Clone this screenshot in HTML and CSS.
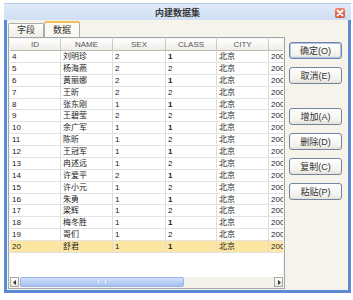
FILE: index.html
```html
<html>
<head>
    <link rel="stylesheet" href="styles.css">
</head>

<body>
    <div class="window">
        <!-- Title bar -->
        <div class="titlebar">
            <span class="title">内建数据集</span>
            <span class="close">
                <svg width="10" height="10" viewBox="0 0 10 10">
                    <path d="M2.5 2.5 L7.5 7.5 M7.5 2.5 L2.5 7.5" stroke="#fff" stroke-width="1.8" stroke-linecap="round" />
                </svg>
            </span>
        </div>

        <div class="client">
            <!-- Tab control with the data grid -->
            <div class="tabs">
                <div class="tabstrip">
                    <span class="tab">字段</span>
                    <span class="tab active">数据</span>
                </div>
                <div class="panel">
                    <div class="grid">
                        <div class="row head">
                            <span>ID</span><span>NAME</span><span>SEX</span><span>CLASS</span><span>CITY</span><span>DATE</span>
                        </div>
                        <div class="row"><span>4</span><span>刘明珍</span><span>2</span><span class="b">1</span><span>北京</span><span>2000-1-1</span></div>
                        <div class="row"><span>5</span><span>杨海燕</span><span>2</span><span>2</span><span>北京</span><span>2000-1-1</span></div>
                        <div class="row"><span>6</span><span>黄丽娜</span><span>2</span><span class="b">1</span><span>北京</span><span>2000-1-1</span></div>
                        <div class="row"><span>7</span><span>王昕</span><span>2</span><span>2</span><span>北京</span><span>2000-1-1</span></div>
                        <div class="row"><span>8</span><span>张东刚</span><span>1</span><span class="b">1</span><span>北京</span><span>2000-1-1</span></div>
                        <div class="row"><span>9</span><span>王碧莹</span><span>2</span><span>2</span><span>北京</span><span>2000-1-1</span></div>
                        <div class="row"><span>10</span><span>余广军</span><span>1</span><span class="b">1</span><span>北京</span><span>2000-1-1</span></div>
                        <div class="row"><span>11</span><span>陈昕</span><span>1</span><span>2</span><span>北京</span><span>2000-1-1</span></div>
                        <div class="row"><span>12</span><span>王冠军</span><span>1</span><span class="b">1</span><span>北京</span><span>2000-1-1</span></div>
                        <div class="row"><span>13</span><span>冉述远</span><span>1</span><span>2</span><span>北京</span><span>2000-1-1</span></div>
                        <div class="row"><span>14</span><span>许爱平</span><span>2</span><span class="b">1</span><span>北京</span><span>2000-1-1</span></div>
                        <div class="row"><span>15</span><span>许小元</span><span>1</span><span>2</span><span>北京</span><span>2000-1-1</span></div>
                        <div class="row"><span>16</span><span>朱勇</span><span>1</span><span class="b">1</span><span>北京</span><span>2000-1-1</span></div>
                        <div class="row"><span>17</span><span>梁辉</span><span>1</span><span>2</span><span>北京</span><span>2000-1-1</span></div>
                        <div class="row"><span>18</span><span>梅冬胜</span><span>1</span><span class="b">1</span><span>北京</span><span>2000-1-1</span></div>
                        <div class="row"><span>19</span><span>哥们</span><span>1</span><span>2</span><span>北京</span><span>2000-1-1</span></div>
                        <div class="row sel"><span>20</span><span>舒君</span><span>1</span><span class="b">1</span><span>北京</span><span>2000-1-1</span></div>
                    </div>

                    <!-- Horizontal scrollbar -->
                    <div class="hscroll">
                        <span class="arrow">
                            <svg width="4" height="5" viewBox="0 0 4 5"><path d="M3 0 L0 2.5 L3 5 Z" fill="#333" /></svg>
                        </span>
                        <span class="thumb"><span class="grip"></span></span>
                        <span class="track"></span>
                        <span class="arrow">
                            <svg width="4" height="5" viewBox="0 0 4 5"><path d="M1 0 L4 2.5 L1 5 Z" fill="#333" /></svg>
                        </span>
                    </div>
                </div>
            </div>

            <!-- Buttons -->
            <div class="buttons">
                <button class="default">确定(O)</button>
                <button>取消(E)</button>
                <button class="spaced">增加(A)</button>
                <button>删除(D)</button>
                <button>复制(C)</button>
                <button>粘贴(P)</button>
            </div>
        </div>
    </div>
</body>
</html>
```

FILE: styles.css
```css
body {
    margin: 0;
    background-color: #ffffff;
    font-family: "Liberation Sans", "Noto Sans CJK SC", sans-serif;
    color: #222;
}

.window {
    margin: 3px 0 0 4px;
    width: 347px;
    height: 290px;
    display: flex;
    flex-direction: column;
}

.titlebar {
    height: 17px;
    box-sizing: border-box;
    border-top: 1px solid #b9cbe6;
    background: linear-gradient(#dfeaf8, #cfdff4);
    display: flex;
    align-items: center;
    justify-content: center;
    position: relative;
}

.title {
    font-size: 9px;
    font-weight: bold;
    color: #3a3a3a;
}

.close {
    position: absolute;
    right: 6px;
    top: 4px;
    width: 10px;
    height: 10px;
    border-radius: 2px;
    background: linear-gradient(#ef8a70, #d4502f);
    display: flex;
}

.client {
    flex: 1;
    display: flex;
    border: 3px solid #5b8ad6;
    border-top: none;
    background-color: #f6f4ea;
}

.tabs {
    width: 277px;
    margin-left: 1px;
    display: flex;
    flex-direction: column;
}

.tabstrip {
    height: 17px;
    display: flex;
    align-items: flex-end;
}

.tab {
    width: 36px;
    height: 14px;
    box-sizing: border-box;
    border: 1px solid #a7aeb4;
    border-bottom: none;
    border-radius: 2px 2px 0 0;
    background: linear-gradient(#fdfdfb, #efeee6);
    font-size: 9px;
    text-align: center;
    line-height: 13px;
    color: #333;
}

.tab.active {
    height: 16px;
    border-top: 2px solid #f2c15a;
    background: #faf9f2;
    line-height: 14px;
}

.panel {
    height: 252px;
    box-sizing: border-box;
    border: 1px solid #9ea8ae;
    padding: 1px;
    display: flex;
    flex-direction: column;
}

.grid {
    height: 238px;
    background-color: #ffffff;
    overflow: hidden;
}

.row {
    display: grid;
    grid-template-columns: 51px 52px 53px 51px 52px 60px;
    height: 11.875px;
}

.row span {
    box-sizing: border-box;
    border-right: 1px solid #dedede;
    border-bottom: 1px solid #e2e2e2;
    padding-left: 2px;
    font-size: 8px;
    line-height: 11px;
    white-space: nowrap;
    overflow: hidden;
}

.row.head {
    height: 12px;
}

.row.head span {
    background: linear-gradient(#ffffff, #eeede8);
    border-right: 1px solid #c9c9c4;
    border-bottom: 1px solid #bcbcb6;
    text-align: center;
    color: #555;
    padding-left: 0;
}

.row.sel {
    background-color: #fde6a1;
}

.row .b {
    font-weight: bold;
}

.hscroll {
    height: 10px;
    display: flex;
    background-color: #f3f2ec;
}

.arrow {
    width: 9px;
    box-sizing: border-box;
    border: 1px solid #a9a9a4;
    background: linear-gradient(#ffffff, #e6e5de);
    display: flex;
    align-items: center;
    justify-content: center;
}

.thumb {
    width: 164px;
    margin-left: 1px;
    box-sizing: border-box;
    border: 1px solid #98b4e6;
    border-radius: 2px;
    background: linear-gradient(#d3e1f8, #b6cdf3 60%, #a7c1ef);
    display: flex;
    align-items: center;
    justify-content: center;
}

.grip {
    width: 6px;
    height: 4px;
    border-left: 1px solid #e8f0fc;
    border-right: 1px solid #e8f0fc;
}

.track {
    flex: 1;
}

.buttons {
    margin-left: 4px;
    padding-top: 22px;
    display: flex;
    flex-direction: column;
    gap: 8px;
}

button {
    width: 53px;
    height: 17px;
    padding: 0;
    border: 1px solid #7584a2;
    border-radius: 3px;
    background: linear-gradient(#ffffff, #f3f2ec 75%, #e3e1d8);
    font-family: "Liberation Sans", "Noto Sans CJK SC", sans-serif;
    font-size: 9px;
    color: #333;
}

button.default {
    box-shadow: inset 0 0 0 1px #a9c3ee;
}

button.spaced {
    margin-top: 16px;
}
```
